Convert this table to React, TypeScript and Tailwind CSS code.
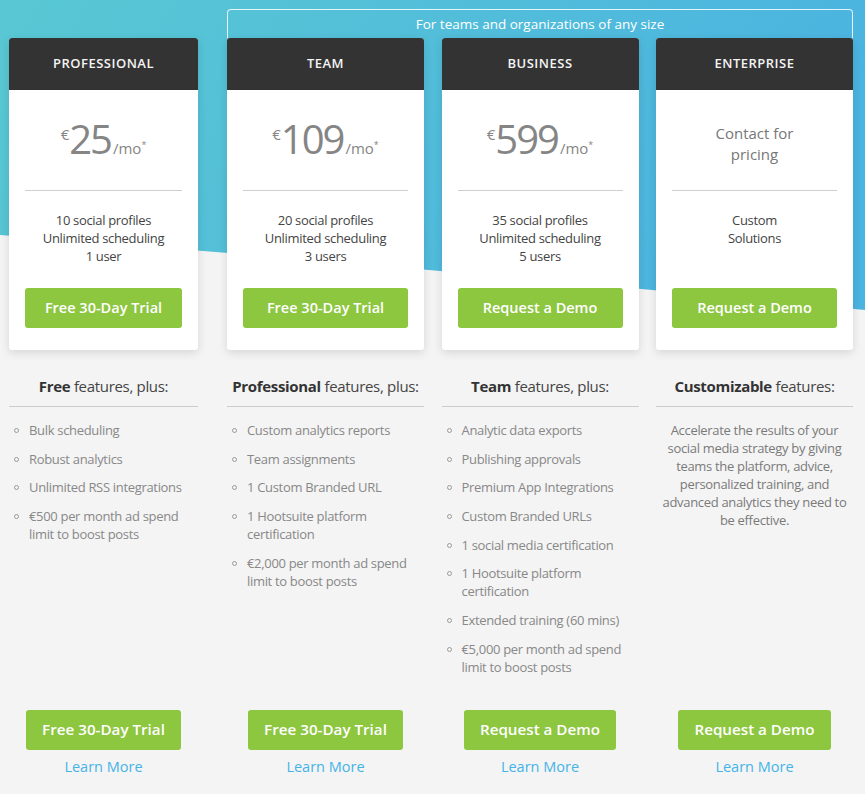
import React from "react";

type Plan = {
  name: string;
  price?: string;
  contact?: boolean;
  features: string[];
  cta: string;
  heading: string;
  headingRest: string;
  list?: string[];
  paragraph?: string;
};

const plans: Plan[] = [
  {
    name: "Professional",
    price: "25",
    features: ["10 social profiles", "Unlimited scheduling", "1 user"],
    cta: "Free 30-Day Trial",
    heading: "Free",
    headingRest: " features, plus:",
    list: [
      "Bulk scheduling",
      "Robust analytics",
      "Unlimited RSS integrations",
      "€500 per month ad spend limit to boost posts",
    ],
  },
  {
    name: "Team",
    price: "109",
    features: ["20 social profiles", "Unlimited scheduling", "3 users"],
    cta: "Free 30-Day Trial",
    heading: "Professional",
    headingRest: " features, plus:",
    list: [
      "Custom analytics reports",
      "Team assignments",
      "1 Custom Branded URL",
      "1 Hootsuite platform certification",
      "€2,000 per month ad spend limit to boost posts",
    ],
  },
  {
    name: "Business",
    price: "599",
    features: ["35 social profiles", "Unlimited scheduling", "5 users"],
    cta: "Request a Demo",
    heading: "Team",
    headingRest: " features, plus:",
    list: [
      "Analytic data exports",
      "Publishing approvals",
      "Premium App Integrations",
      "Custom Branded URLs",
      "1 social media certification",
      "1 Hootsuite platform certification",
      "Extended training (60 mins)",
      "€5,000 per month ad spend limit to boost posts",
    ],
  },
  {
    name: "Enterprise",
    contact: true,
    features: ["Custom", "Solutions"],
    cta: "Request a Demo",
    heading: "Customizable",
    headingRest: " features:",
    paragraph:
      "Accelerate the results of your social media strategy by giving teams the platform, advice, personalized training, and advanced analytics they need to be effective.",
  },
];

function Card({ plan }: { plan: Plan }) {
  return (
    <div className="bg-white rounded-[3px] overflow-hidden shadow-[0_3px_10px_rgba(0,0,0,0.12)] pb-[22px]">
      <div className="h-[52px] bg-[#333333] flex items-center justify-center text-[#f4f4f4] text-[13px] font-semibold tracking-[0.5px] uppercase">
        {plan.name}
      </div>
      <div className="px-4">
        <div className="h-[101px] flex items-center justify-center border-b border-[#cfcfcf]">
          {plan.contact ? (
            <div className="mt-[7px] text-center text-[15px] leading-[21px] tracking-normal text-[#777777]">
              Contact for
              <br />
              pricing
            </div>
          ) : (
            <div className="mt-[7px] text-center leading-[40px] text-[#858585] whitespace-nowrap tracking-normal">
              <span className="text-[15px] leading-[30px] align-top">€</span>
              <span className="text-[40px] font-medium tracking-[-2px]">{plan.price}</span>
              <span className="text-[15px] ml-[2px]">/mo</span>
              <span className="text-[9px] leading-[9px] align-super">*</span>
            </div>
          )}
        </div>
        <div className="h-[97px] pt-[20px] text-center text-[13px] leading-[18px] text-[#444444]">
          {plan.features.map((f) => (
            <div key={f}>{f}</div>
          ))}
        </div>
        <button className="w-full h-[40px] rounded-[3px] bg-[#8dc63f] text-white text-[14.5px] font-semibold tracking-normal">
          {plan.cta}
        </button>
      </div>
    </div>
  );
}

function Column({ plan, className }: { plan: Plan; className: string }) {
  return (
    <div className={"flex flex-col " + className}>
      <Card plan={plan} />
      <div className="mt-[25px] pb-[9px] border-b border-[#cccccc] text-center text-[15px] leading-[22px] text-[#444444]">
        <span className="font-bold text-[#333333]">{plan.heading}</span>
        {plan.headingRest}
      </div>
      <div className="flex-1 pt-[14px]">
        {plan.list ? (
          <ul className="flex flex-col gap-[10.7px]">
            {plan.list.map((item) => (
              <li key={item} className="flex text-[13px] leading-[18px] text-[#888888]">
                <span className="shrink-0 mt-[7px] ml-[5px] w-[5px] h-[5px] rounded-full border border-[#999999]" />
                <span className="ml-[10px]">{item}</span>
              </li>
            ))}
          </ul>
        ) : (
          <p className="px-[3px] text-center text-[13px] leading-[18px] text-[#7a7a7a]">
            {plan.paragraph}
          </p>
        )}
      </div>
      <div className="pt-[34px] flex flex-col items-center">
        <button className="h-[40px] px-4 rounded-[3px] bg-[#8dc63f] text-white text-[15.2px] font-semibold tracking-normal">
          {plan.cta}
        </button>
        <a className="mt-[7px] text-[14.5px] leading-[20px] tracking-normal text-[#45b3e7]" href="#">
          Learn More
        </a>
      </div>
    </div>
  );
}

export default function App() {
  return (
    <div className="relative min-h-[794px] w-full bg-[#f4f4f4] font-['Open_Sans',sans-serif] tracking-[-0.02em] overflow-hidden">
      <svg
        className="absolute left-0 top-0 w-full h-[310px]"
        viewBox="0 0 865 310"
        preserveAspectRatio="none"
      >
        <defs>
          <linearGradient id="bgg" x1="0" y1="0" x2="1" y2="0.2">
            <stop offset="0" stopColor="#59c8d3" />
            <stop offset="1" stopColor="#4bb4e0" />
          </linearGradient>
        </defs>
        <path d="M0 0 H865 V310 Q432 268 0 235 Z" fill="url(#bgg)" />
      </svg>
      <div className="relative flex items-stretch pl-[9px] pt-[9px] pb-[17px]">
        <Column plan={plans[0]} className="w-[189px] mt-[29px]" />
        <div className="ml-[29px] w-[626px] flex flex-col">
          <div className="h-[29px] border border-b-0 border-white/85 rounded-t-[4px] flex items-center justify-center text-white text-[13.5px] tracking-normal">
            For teams and organizations of any size
          </div>
          <div className="flex-1 flex justify-between items-stretch">
            <Column plan={plans[1]} className="w-[197px]" />
            <Column plan={plans[2]} className="w-[197px]" />
            <Column plan={plans[3]} className="w-[197px]" />
          </div>
        </div>
      </div>
    </div>
  );
}
